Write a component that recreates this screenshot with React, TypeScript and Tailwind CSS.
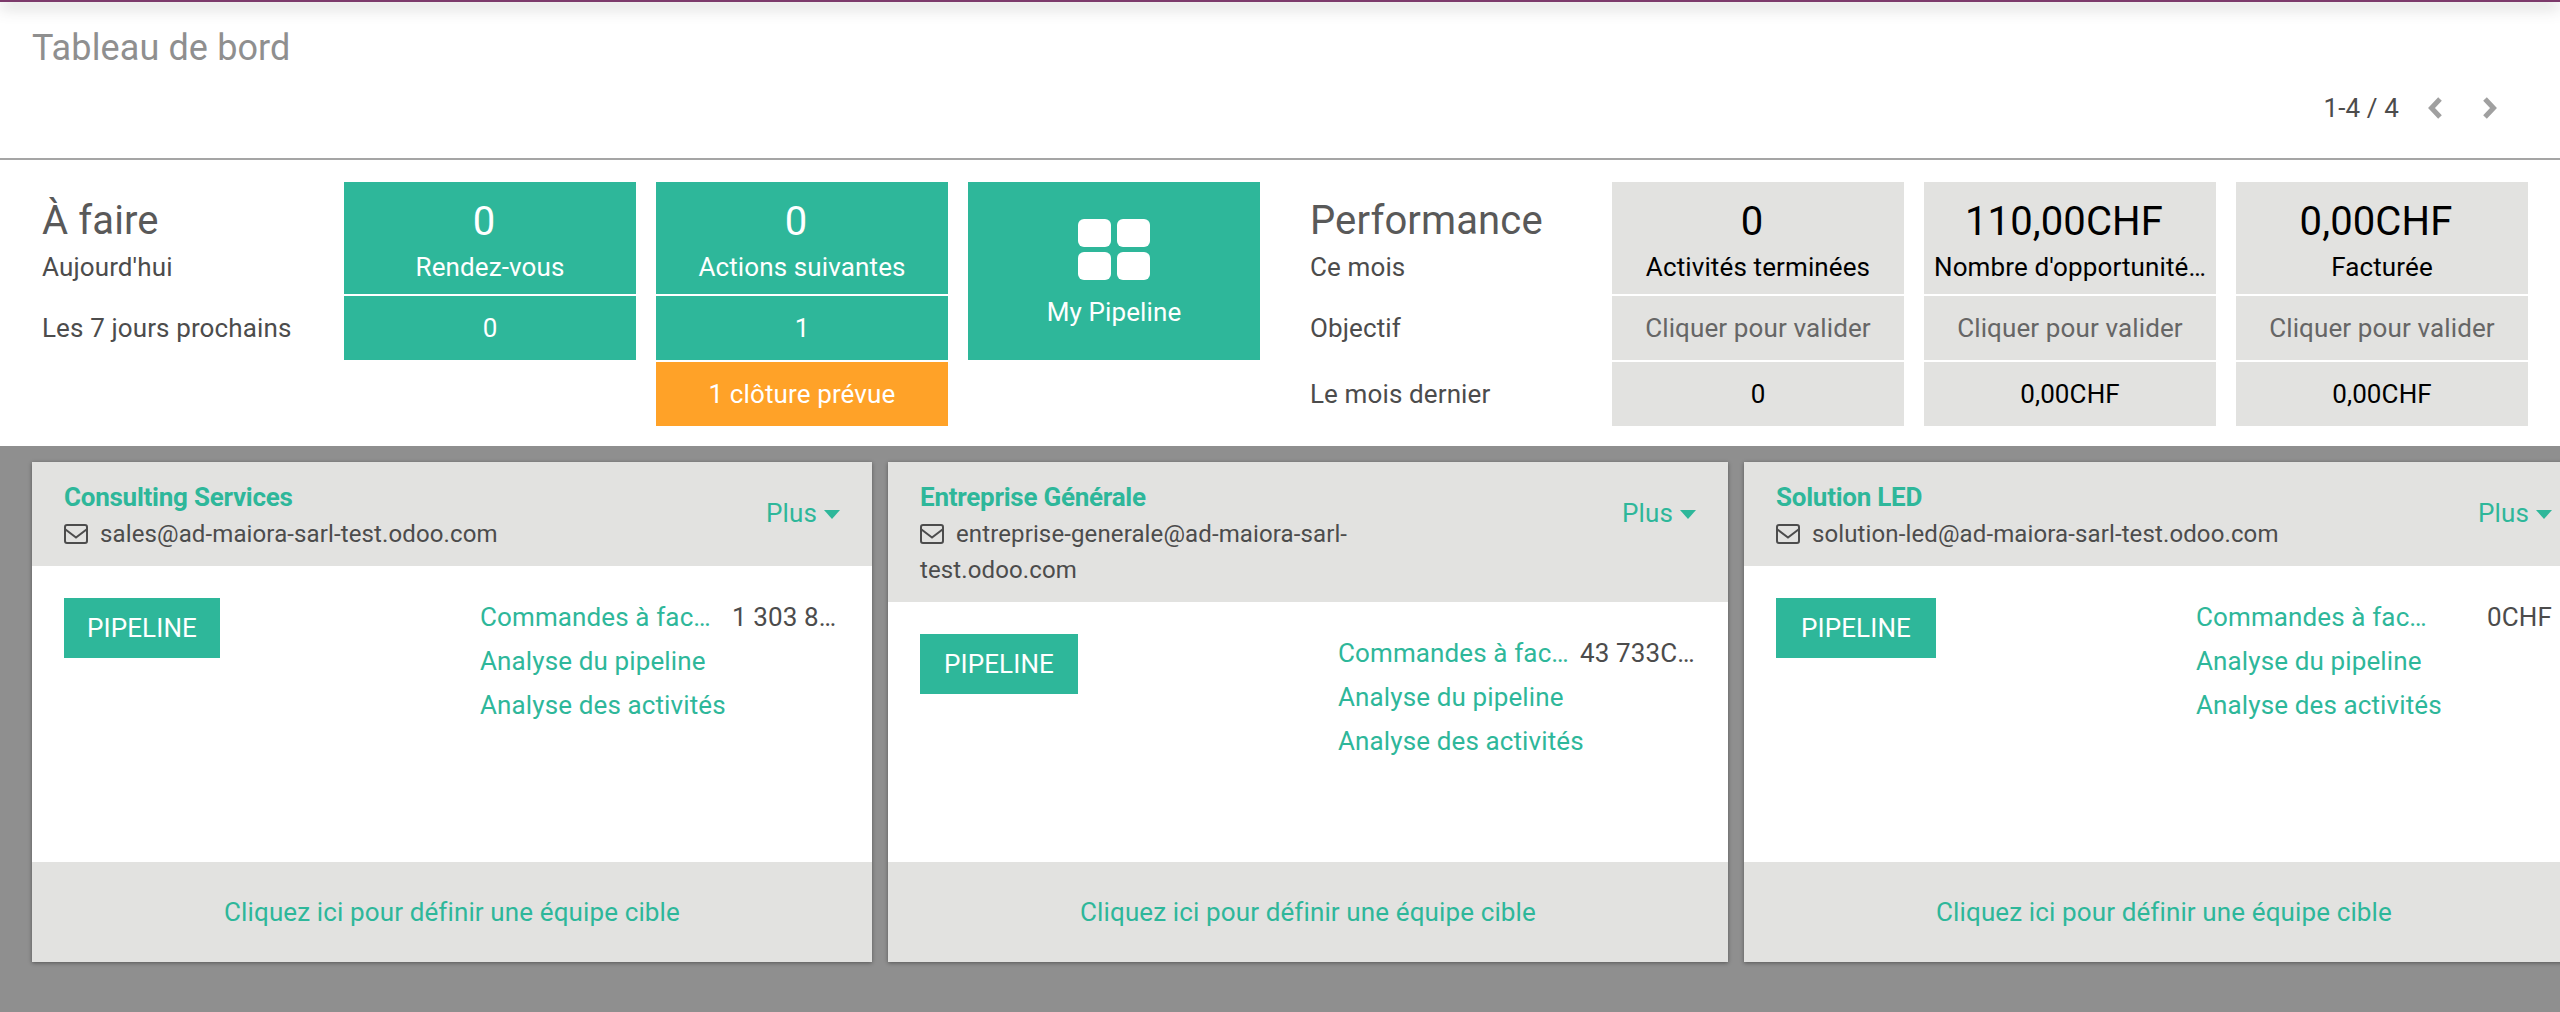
function Tile({ top, label, tone }: { top: string; label: string; tone: "green" | "gray" }) {
  const c = tone === "green" ? "bg-[#2eb79a] text-white" : "bg-[#e2e2e0] text-black";
  return (
    <div className={`${c} flex h-[112px] flex-col items-center px-[10px] pt-[12px] text-center`}>
      <div className="h-[53px] pr-3 text-[40px] leading-[56px]">{top}</div>
      <div className="w-full truncate text-[26px] leading-[40px]">{label}</div>
    </div>
  );
}

function Cell({ children, className }: { children: React.ReactNode; className: string }) {
  return <div className={`flex h-[64px] items-center justify-center text-[26px] ${className}`}>{children}</div>;
}

function RowLabel({ children }: { children: React.ReactNode }) {
  return <div className="flex items-center text-[26px] leading-[36px] text-[#4c4c4c]">{children}</div>;
}

function Mail() {
  return (
    <svg viewBox="0 0 24 20" className="mr-3 inline-block h-[20px] w-[24px] align-[-2px]" fill="none" stroke="#4c4c4c" strokeWidth="2">
      <rect x="1" y="1" width="22" height="18" rx="2" />
      <path d="M1.5 5.5 12 13.5 22.5 5.5" />
    </svg>
  );
}

type Team = { name: string; email: string; value: string; valueClass: string };

function Card({ team }: { team: Team }) {
  return (
    <div className="flex h-[500px] w-[840px] shrink-0 flex-col bg-white shadow-[0_1px_4px_rgba(0,0,0,0.4)]">
      <div className="flex items-start justify-between bg-[#e2e2e0] px-8 pt-4 pb-[14px]">
        <div className="w-[540px]">
          <div className="text-[26px] leading-[38px] font-bold tracking-[-0.25px] text-[#2eb79a]">{team.name}</div>
          <div className="text-[24px] leading-[36px] text-[#4c4c4c]">
            <Mail />
            {team.email}
          </div>
        </div>
        <div className="mt-[16px] flex items-center text-[26px] leading-[38px] text-[#2eb79a]">
          Plus
          <span className="mt-[2px] ml-[7px] h-0 w-0 border-x-[8px] border-t-[9px] border-x-transparent border-t-[#2eb79a]" />
        </div>
      </div>
      <div className="flex flex-1 items-start px-8 pt-8">
        <button className="h-[60px] w-[160px] bg-[#2eb79a] text-[26px] text-white">PIPELINE</button>
        <div className="ml-[260px] text-[26px] leading-[44px] text-[#2eb79a]">
          <div className="mt-[-3px] flex h-[44px]">
            <div className="w-[234px] truncate">Commandes à facturer</div>
            <div className={`truncate text-[#4c4c4c] ${team.valueClass}`}>{team.value}</div>
          </div>
          <div>Analyse du pipeline</div>
          <div>Analyse des activités</div>
        </div>
      </div>
      <div className="flex h-[100px] items-center justify-center bg-[#e2e2e0] text-[26px] text-[#2eb79a]">
        Cliquez ici pour définir une équipe cible
      </div>
    </div>
  );
}

const teams: Team[] = [
  { name: "Consulting Services", email: "sales@ad-maiora-sarl-test.odoo.com", value: "1 303 857,00CHF", valueClass: "ml-[18px] w-[108px]" },
  { name: "Entreprise Générale", email: "entreprise-generale@ad-maiora-sarl-test.odoo.com", value: "43 733CHF", valueClass: "ml-[8px] w-[116px]" },
  { name: "Solution LED", email: "solution-led@ad-maiora-sarl-test.odoo.com", value: "0CHF", valueClass: "ml-[18px] w-[104px] text-right" },
];

export default function App() {
  const green = "bg-[#2eb79a] text-white";
  const gray = "bg-[#e2e2e0] text-black";
  const hint = "bg-[#e2e2e0] text-[#666666]";
  return (
    <div className="flex h-[1012px] w-[2560px] flex-col overflow-hidden bg-[#8f8f8f] font-['Roboto',sans-serif] tracking-[0.12px]">
      <header className="relative h-[160px] shrink-0 border-b-2 border-[#a5a5a5] bg-white">
        <div className="h-[2px] bg-[#7c3a6b] shadow-[0_3px_16px_rgba(0,0,0,0.7)]" />
        <div className="flex h-[156px] flex-col justify-between pt-[22px] pr-[62px] pb-[32px] pl-8">
          <h1 className="text-[36px] leading-[48px] text-[#8f8f8f]">Tableau de bord</h1>
          <div className="flex items-center justify-end text-[26px] leading-[36px] text-[#4c4c4c]">
            <span>1-4 / 4</span>
            <svg viewBox="0 0 16 24" className="ml-[28px] h-[24px] w-[16px]" fill="none" stroke="#a0a0a0" strokeWidth="5">
              <path d="M13 3 4.5 12 13 21" />
            </svg>
            <svg viewBox="0 0 16 24" className="ml-[39px] h-[24px] w-[16px]" fill="none" stroke="#a0a0a0" strokeWidth="5">
              <path d="M3 3 11.5 12 3 21" />
            </svg>
          </div>
        </div>
      </header>

      <section className="flex h-[286px] shrink-0 gap-[50px] bg-white pt-[22px] pl-[42px]">
        <div className="grid grid-cols-[282px_292px_292px_292px] grid-rows-[112px_64px_64px] gap-x-5 gap-y-[2px]">
          <div className="flex flex-col">
            <div className="h-[67px] pt-[11px] text-[40px] leading-[56px] text-[#595959]">À faire</div>
            <RowLabel>Aujourd'hui</RowLabel>
          </div>
          <Tile top="0" label="Rendez-vous" tone="green" />
          <Tile top="0" label="Actions suivantes" tone="green" />
          <div className="row-span-2 flex flex-col items-center bg-[#2eb79a] pt-[37px] text-white">
            <svg viewBox="0 0 72 61" className="h-[61px] w-[72px]" fill="#ffffff">
              <rect x="0" y="0" width="33" height="28" rx="6" />
              <rect x="39" y="0" width="33" height="28" rx="6" />
              <rect x="0" y="33" width="33" height="28" rx="6" />
              <rect x="39" y="33" width="33" height="28" rx="6" />
            </svg>
            <div className="mt-[12px] text-[26px] leading-[40px]">My Pipeline</div>
          </div>
          <RowLabel>Les 7 jours prochains</RowLabel>
          <Cell className={green}>0</Cell>
          <Cell className={green}>1</Cell>
          <div />
          <div />
          <Cell className="bg-[#ffa228] text-white">1 clôture prévue</Cell>
        </div>

        <div className="grid grid-cols-[282px_292px_292px_292px] grid-rows-[112px_64px_64px] gap-x-5 gap-y-[2px]">
          <div className="flex flex-col">
            <div className="h-[67px] pt-[11px] text-[40px] leading-[56px] text-[#595959]">Performance</div>
            <RowLabel>Ce mois</RowLabel>
          </div>
          <Tile top="0" label="Activités terminées" tone="gray" />
          <Tile top="110,00CHF" label="Nombre d'opportunités gagnées" tone="gray" />
          <Tile top="0,00CHF" label="Facturée" tone="gray" />
          <RowLabel>Objectif</RowLabel>
          <Cell className={hint}>Cliquer pour valider</Cell>
          <Cell className={hint}>Cliquer pour valider</Cell>
          <Cell className={hint}>Cliquer pour valider</Cell>
          <RowLabel>Le mois dernier</RowLabel>
          <Cell className={gray}>0</Cell>
          <Cell className={gray}>0,00CHF</Cell>
          <Cell className={gray}>0,00CHF</Cell>
        </div>
      </section>

      <main className="flex flex-1 items-start gap-4 pt-4 pl-8">
        {teams.map((t) => (
          <Card key={t.name} team={t} />
        ))}
      </main>
    </div>
  );
}
